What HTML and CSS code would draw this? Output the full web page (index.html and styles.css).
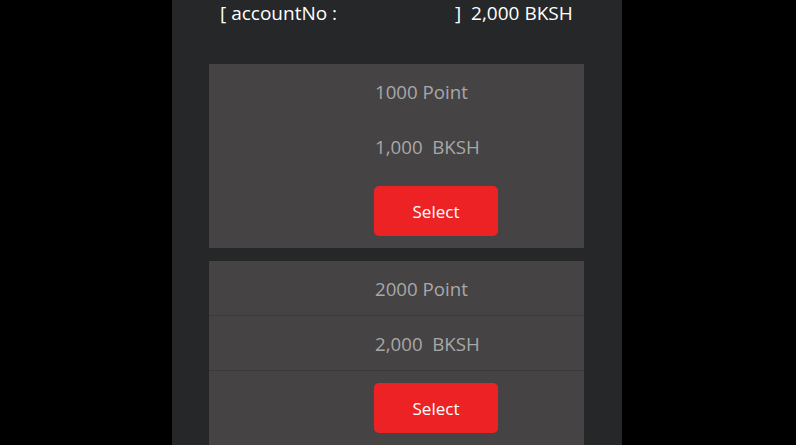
FILE: index.html
```html
<!DOCTYPE html>
<html>
<head>
<meta charset="utf-8">
<link rel="stylesheet" href="styles.css">
</head>
<body>
<div class="panel">
  <div class="header">
    <span class="acc">[ accountNo :</span>
    <span class="bal">]&nbsp;&nbsp;2,000 BKSH</span>
  </div>
  <div class="card">
    <div class="row">1000 Point</div>
    <div class="row">1,000&nbsp; BKSH</div>
    <div class="row btnrow"><button class="select">Select</button></div>
  </div>
  <div class="card lined">
    <div class="row">2000 Point</div>
    <div class="row">2,000&nbsp; BKSH</div>
    <div class="row btnrow"><button class="select">Select</button></div>
  </div>
</div>
</body>
</html>
```
FILE: styles.css
```css
html, body {
  margin: 0;
  padding: 0;
  background: #000;
  height: 100%;
  overflow: hidden;
}
body {
  font-family: "Open Sans", "Noto Sans", sans-serif;
}
.panel {
  width: 450px;
  margin-left: 172px;
  min-height: 445px;
  background: #262729;
  padding: 0 38px 0 37px;
  box-sizing: border-box;
}
.header {
  height: 64px;
  display: flex;
  padding-left: 11px;
  color: #fff;
  font-size: 19px;
  line-height: 26px;
  box-sizing: border-box;
}
.acc { width: 235px; }
.card {
  background: #454344;
  padding-left: 166px;
  margin-bottom: 13px;
  color: #a8a8a8;
  font-size: 18.7px;
}
.row {
  height: 55px;
  display: flex;
  align-items: center;
}
.btnrow {
  height: 74px;
  align-items: flex-start;
  padding-top: 12px;
  box-sizing: border-box;
}
.lined .row {
  border-bottom: 1px solid #3a3939;
  margin-left: -166px;
  padding-left: 166px;
  box-sizing: border-box;
}
.lined .btnrow { border-bottom: none; }
.select {
  width: 124px;
  height: 50px;
  margin-left: -1px;
  border: none;
  border-radius: 5px;
  background: #ed2224;
  color: #fff;
  font-family: "Open Sans", "Noto Sans", sans-serif;
  font-size: 17px;
  padding: 0;
}
```
